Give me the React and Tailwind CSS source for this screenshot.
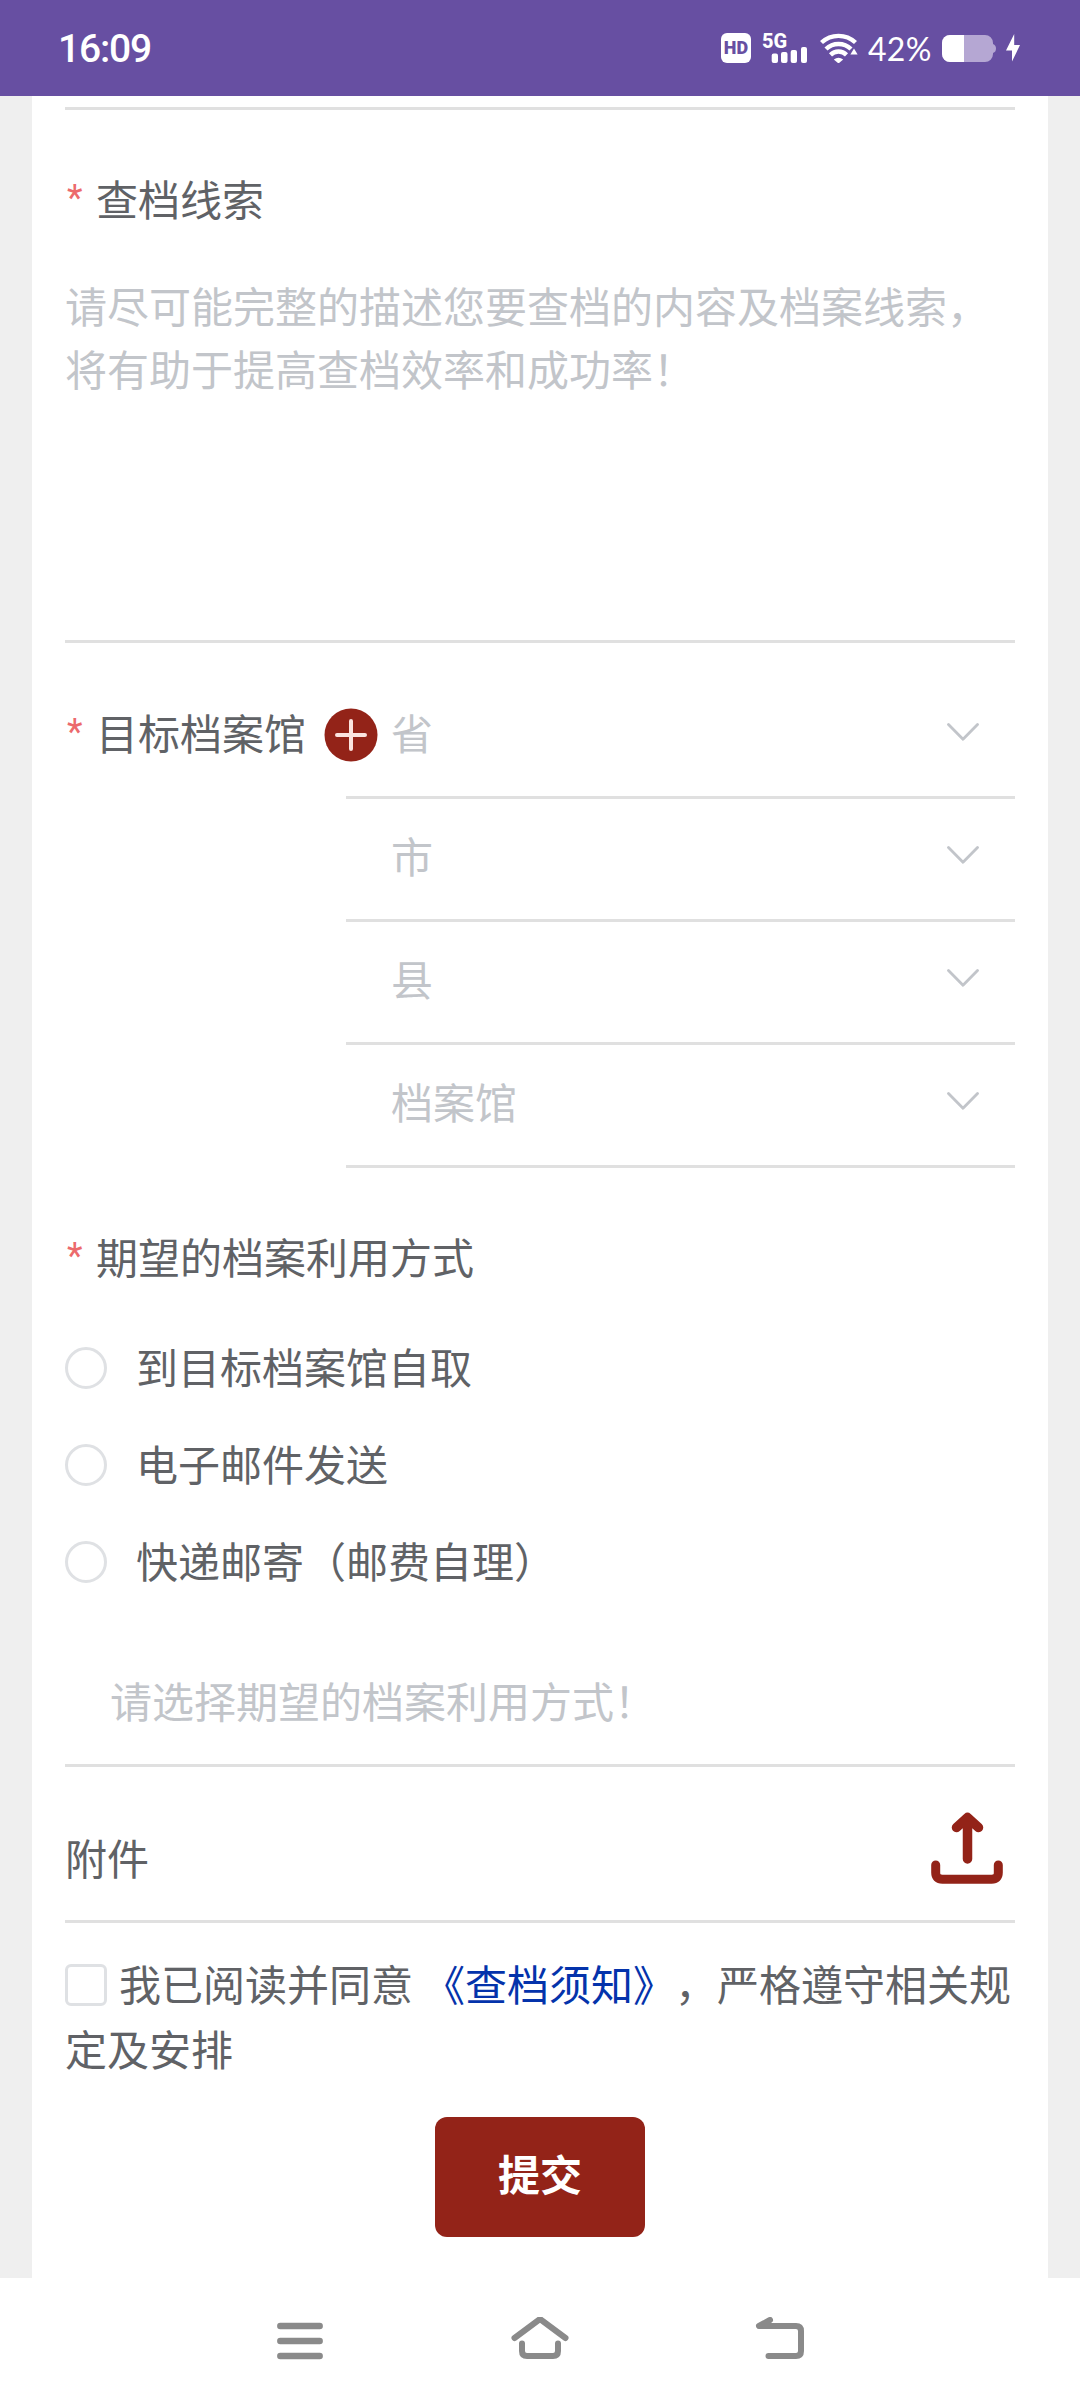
import React, { useState } from "react";

const REGION_FIELDS = ["省", "市", "县", "档案馆"];
const DELIVERY_OPTIONS = ["到目标档案馆自取", "电子邮件发送", "快递邮寄（邮费自理）"];

function StatusBar() {
  return (
    <header className="h-24 bg-[#674fa2] text-white flex items-center justify-between pl-[58px] pr-[60px]">
      <span className="mt-[2px] font-['Roboto',sans-serif] font-medium text-[39px] leading-none tracking-[-1.2px]">16:09</span>

      <div className="flex items-center">
        {/* HD badge */}
        <span className="w-[30px] h-[30px] rounded-[6px] bg-white text-[#674fa2] flex items-center justify-center font-['Roboto',sans-serif] font-black text-[18px] leading-none">
          HD
        </span>

        {/* Network type and signal */}
        <div className="ml-[11px] w-[46px] h-[30px] relative">
          <span className="absolute left-0 -top-[2px] font-['Roboto',sans-serif] font-extrabold text-[20px] leading-[20px]">5G</span>
          <svg className="absolute left-0 top-0" width="46" height="30" viewBox="0 0 46 30" fill="currentColor">
            <rect x="9.7" y="20.5" width="6.3" height="9.5" rx="2" />
            <rect x="19" y="19" width="6.5" height="11" rx="2" />
            <rect x="28.7" y="17" width="6.3" height="13" rx="2" />
            <rect x="39" y="14" width="6" height="16" rx="2" />
          </svg>
        </div>

        {/* Wifi */}
        <svg className="ml-[12px]" width="38" height="30" viewBox="0 0 38 30" fill="none" stroke="currentColor" strokeWidth="4.4">
          <path d="M1.5 9.5a25 25 0 0 1 34 0" />
          <path d="M6 16a18 18 0 0 1 25 0" />
          <path d="M10.500 21.800a11.500 11.500 0 0 1 16 0" />
          <path d="M13.800 26.400q4.700-3.400 9.400 0L18.500 30.500z" fill="currentColor" stroke="none" />
          <path d="M34 15.500l3.600 6h-7.200z" fill="currentColor" stroke="none" />
        </svg>

        <span className="ml-[10px] w-[74px] mt-[2px] font-['Lato',sans-serif] text-[32px] leading-none tracking-[0.3px]">42%</span>

        {/* Battery */}
        <svg width="54" height="27" viewBox="0 0 54 27">
          <path d="M8 0h35a8 8 0 0 1 8 8v1q3 1 3 4.500t-3 4.500v1a8 8 0 0 1-8 8H8a8 8 0 0 1-8-8V8a8 8 0 0 1 8-8z" fill="#b5a7d3" />
          <path d="M8 0h14v27H8a8 8 0 0 1-8-8V8a8 8 0 0 1 8-8z" fill="#fff" />
        </svg>
        <svg className="ml-[10px]" width="14" height="28" viewBox="0 0 14 28" fill="currentColor">
          <path d="M8.200 0v11H14L6 27.500V16.500H0z" />
        </svg>
      </div>
    </header>
  );
}

function Label({ children }) {
  return (
    <div className="h-[60px] flex items-center shrink-0">
      <span className="w-[31px] pl-[2px] text-[36px] text-[#ec6a6c] font-['Roboto',sans-serif]">*</span>
      <span>{children}</span>
    </div>
  );
}

function ChevronDown() {
  return (
    <svg width="32" height="18" viewBox="0 0 32 18" fill="none" stroke="#c2c5ca" strokeWidth="2.800" strokeLinecap="round" strokeLinejoin="round">
      <path d="M1.500 1.500L16 16.200 30.500 1.500" />
    </svg>
  );
}

function NavBar() {
  return (
    <nav className="h-[126px] bg-white flex justify-center items-center text-[#8a8a8a]">
      <div className="grid grid-cols-3 w-[720px] justify-items-center">
        <svg width="60" height="48" viewBox="0 0 60 48" fill="none" stroke="currentColor" strokeWidth="6.400" strokeLinecap="round">
          <path d="M10.300 9h39.400M10.300 24h39.400M10.300 39h39.400" />
        </svg>
        <svg width="60" height="48" viewBox="0 0 60 48" fill="none" stroke="currentColor" strokeWidth="6" strokeLinecap="round" strokeLinejoin="round">
          <path d="M4.500 21L30 2l25.500 19" />
          <path d="M12 26.500V34q0 5 5 5h26q5 0 5-5v-7.500" />
        </svg>
        <svg width="60" height="48" viewBox="0 0 60 48" fill="none" stroke="currentColor" strokeWidth="6" strokeLinecap="round" strokeLinejoin="round">
          <path d="M20 3L9 9h37q5 0 5 5v20q0 5-5 5H18.500" />
        </svg>
      </div>
    </nav>
  );
}

export default function App() {
  const [delivery, setDelivery] = useState(null);
  const [agreed, setAgreed] = useState(false);

  return (
    <div className="w-[1080px] h-[2404px] overflow-hidden flex flex-col bg-[#efefef] font-['Noto_Sans_CJK_SC',sans-serif] text-[42px] leading-[60px] text-[#606266] [text-spacing-trim:space-all]">
      <StatusBar />

      <main className="flex-1 mx-8 px-[33px] pt-[11px] bg-white flex flex-col">
        <div className="h-[3px] shrink-0 bg-[#e0e0e0]" />

        {/* Search clues */}
        <section className="pt-[58px]">
          <Label>查档线索</Label>
          <div className="mt-[45px] h-[370px] border-b-3 border-[#e0e0e0] leading-[63px] text-[#c2c5ca]">
            请尽可能完整的描述您要查档的内容及档案线索，
            <br />
            将有助于提高查档效率和成功率！
          </div>
        </section>

        {/* Target archive */}
        <section className="mt-[33px] flex">
          <div className="w-[281px] h-[112px] shrink-0 flex items-center">
            <Label>目标档案馆</Label>
            <button className="ml-[18px] mt-[6px] shrink-0 rounded-full">
              <svg width="54" height="54" viewBox="0 0 54 54">
                <circle cx="27" cy="27" r="26.500" fill="#932318" />
                <path d="M27 13v28M13 27h28" stroke="#fbe3df" strokeWidth="4" strokeLinecap="round" />
              </svg>
            </button>
          </div>
          <div className="flex-1">
            {REGION_FIELDS.map((name) => (
              <div key={name} className="h-[123px] pl-[45px] pr-[36px] pb-[8px] border-b-3 border-[#e0e0e0] flex items-center justify-between text-[#c2c5ca]">
                <span>{name}</span>
                <ChevronDown />
              </div>
            ))}
          </div>
        </section>

        {/* Delivery method */}
        <section className="mt-[58px]">
          <Label>期望的档案利用方式</Label>
          <div className="mt-[61px] flex flex-col gap-[55px]">
            {DELIVERY_OPTIONS.map((option) => (
              <div key={option} onClick={() => setDelivery(option)} className="h-[42px] flex items-center gap-[29px]">
                <span className={`w-[42px] h-[42px] rounded-full border-3 ${delivery === option ? "border-[#932318]" : "border-[#dfe1e4]"}`} />
                <span className="-mt-[5px]">{option}</span>
              </div>
            ))}
          </div>
          <div className="mt-[67px] h-[117px] pl-[45px] pb-[14px] border-b-3 border-[#e0e0e0] flex items-center text-[#c2c5ca]">
            请选择期望的档案利用方式！
          </div>
        </section>

        {/* Attachment */}
        <section className="h-[156px] pt-[9px] pr-[12px] border-b-3 border-[#e0e0e0] flex items-center justify-between">
          <span className="mt-[17px]">附件</span>
          <svg width="72" height="72" viewBox="0 0 72 72" fill="none" stroke="#932318" strokeWidth="9.500" strokeLinecap="round" strokeLinejoin="round">
            <path d="M36.500 47V7M25.500 15.500L36.500 5.500l11 10" />
            <path d="M29 12.500L36.500 5l7.500 7.500z" strokeWidth="5" fill="#932318" />
            <path d="M4.700 53v7.500q0 6.700 6.700 6.700h49.200q6.700 0 6.700-6.700V53" strokeWidth="9" />
          </svg>
        </section>

        {/* Agreement */}
        <section className="mt-[27px] leading-[65px] whitespace-nowrap">
          <div className="flex items-center">
            <button
              onClick={() => setAgreed(!agreed)}
              className={`w-[42px] h-[42px] mt-[4px] mr-[12px] shrink-0 rounded-[6px] border-3 border-[#dfe1e4] ${agreed ? "bg-[#932318]" : "bg-white"}`}
            />
            <span>我已阅读并同意</span>
            <span className="ml-[10px] text-[#0433ab]">《查档须知》</span>
            <span>，严格遵守相关规</span>
          </div>
          <div>定及安排</div>
        </section>

        <button className="mt-[37px] w-[210px] h-[120px] shrink-0 self-center rounded-[12px] bg-[#932318] text-white font-bold pb-[8px]">
          提交
        </button>
      </main>

      <NavBar />
    </div>
  );
}
